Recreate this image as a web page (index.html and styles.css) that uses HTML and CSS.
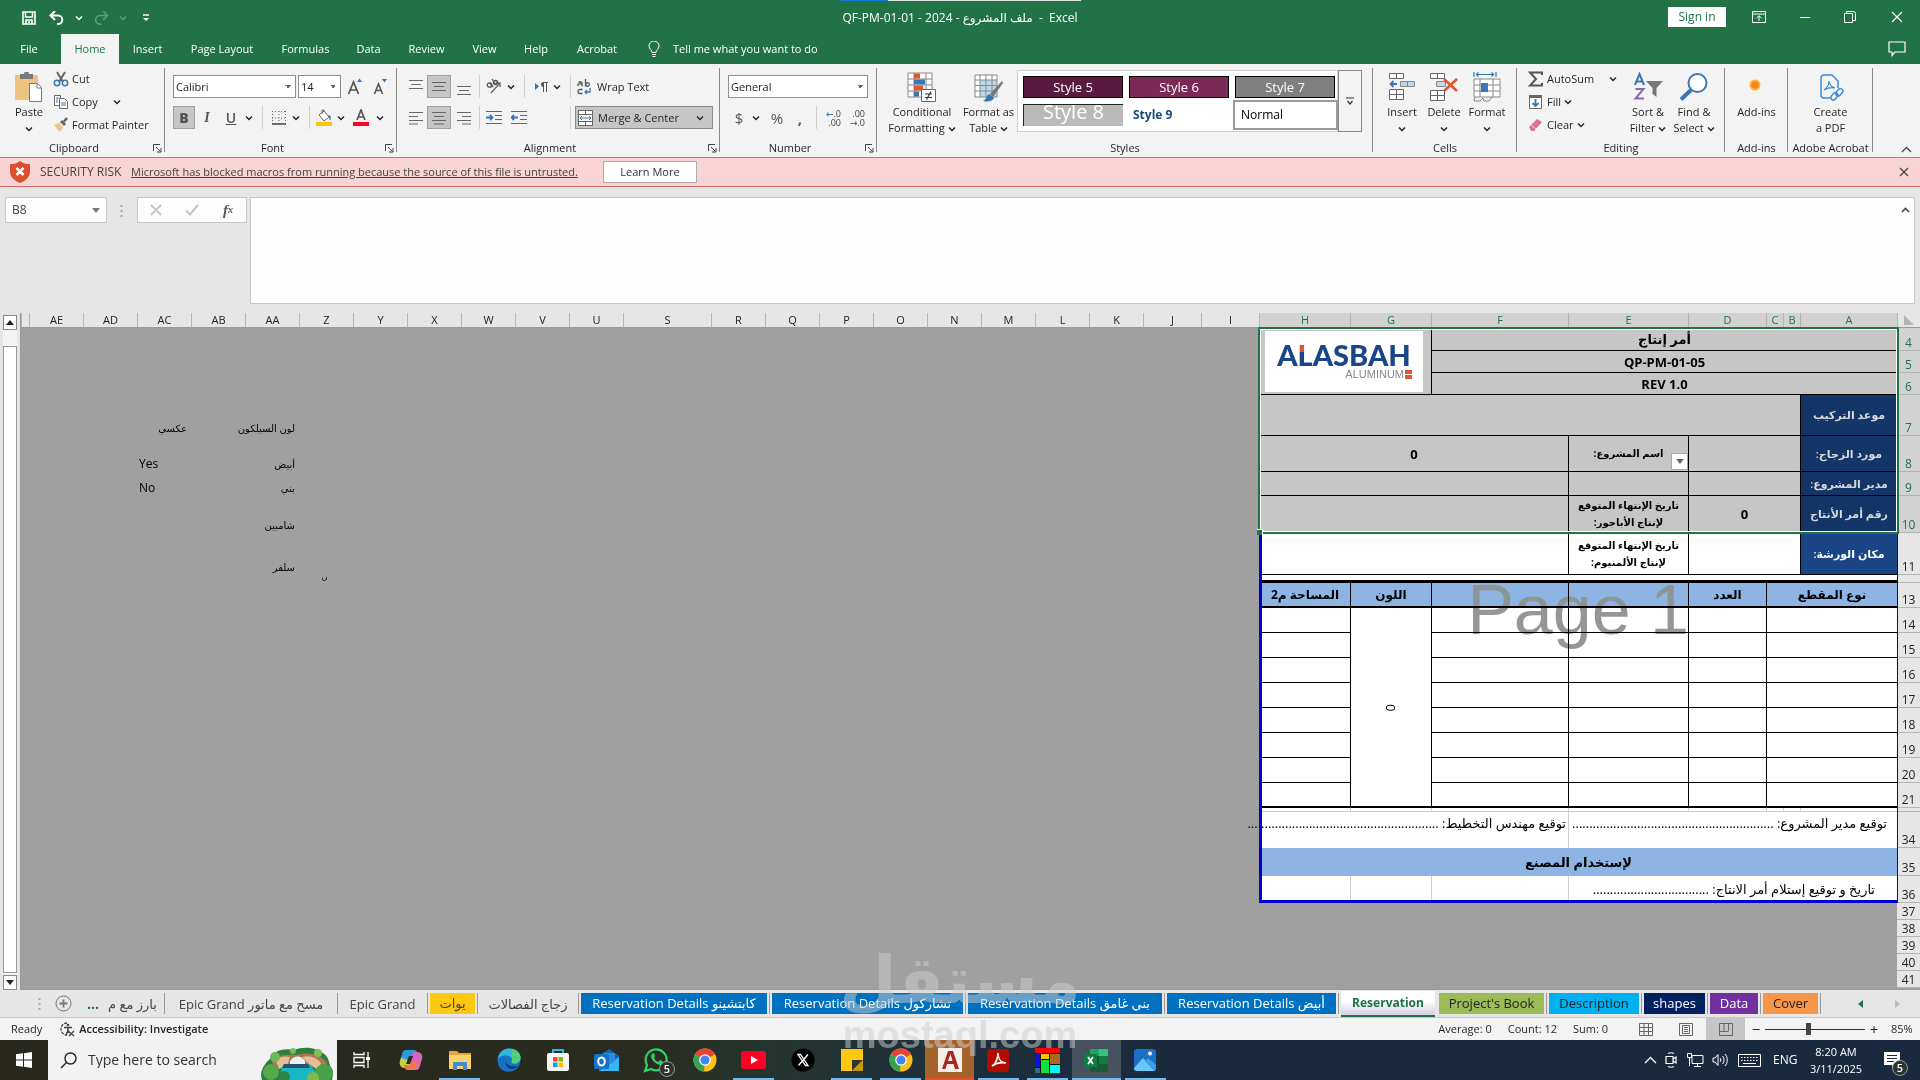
FILE: index.html
```html
<!DOCTYPE html>
<html lang="en">
<head>
<meta charset="utf-8">
<title>QF-PM-01-01 - 2024 - Excel</title>
<link rel="stylesheet" href="styles.css">
</head>
<body>
<svg class="defs" aria-hidden="true">
  <symbol id="caret" viewBox="0 0 8 6"><path d="M1 1.500 4 4.500 7 1.500" fill="none" stroke="currentColor" stroke-width="1.500"/></symbol>
  <symbol id="launch" viewBox="0 0 9 9"><path d="M.5 7V.5H7M3 3l4.500 4.500M8 4v4H4" fill="none" stroke="#444"/></symbol>
  <symbol id="chrome" viewBox="0 0 24 24"><circle cx="12" cy="12" r="11.500" fill="#fbc116"/><path d="M12 12 2 6.200A11.500 11.500 0 0 1 22 6.200Z" fill="#e94335"/><path d="M12 12 2 6.200A11.500 11.500 0 0 0 11 23.500Z" fill="#34a353"/><circle cx="12" cy="12" r="5.800" fill="#fff"/><circle cx="12" cy="12" r="4.600" fill="#4285f4"/></symbol>
</svg>

<header class="top">
  <div class="loading"></div>
  <div class="titlebar">
    <div class="qat">
      <button aria-label="Save"><svg width="14" height="14"><path d="M1 1h12v12H1zM3.500 1v5h7V1M4 13V9h6v4M7 10v2" fill="none" stroke="#fff" stroke-width="1.600"/></svg></button>
      <button aria-label="Undo"><svg width="16" height="14"><path d="M6 0 1.500 4.500 6 9M2 4.500h7a4.300 4.300 0 0 1 0 8.600H8" fill="none" stroke="#fff" stroke-width="2"/></svg></button>
      <button aria-label="Undo list"><svg width="8" height="6"><use href="#caret"/></svg></button>
      <button aria-label="Redo" class="dim"><svg width="16" height="14"><path d="M10 0l4.500 4.500L10 9M14 4.500H7a4.300 4.300 0 0 0 0 8.600h1" fill="none" stroke="#51a673" stroke-width="1.600"/></svg></button>
      <button aria-label="Redo list" class="dim"><svg width="8" height="6"><use href="#caret"/></svg></button>
      <button aria-label="Customize toolbar"><svg width="8" height="8"><path d="M1 1h6" stroke="#fff" stroke-width="1.400"/><path d="M1 4h6L4 7z" fill="#fff"/></svg></button>
    </div>
    <h1 class="doc">QF-PM-01-01 - 2024 - <bdi>ملف المشروع</bdi>&nbsp; -&nbsp; Excel</h1>
    <div class="winctl">
      <button class="signin">Sign in</button>
      <button aria-label="Ribbon display"><svg width="14" height="12"><path d="M.5.500h13v11H.5zM.5 3h13M7 10V5M4.500 7 7 4.700 9.500 7" fill="none" stroke="#fff"/></svg></button>
      <button aria-label="Minimize"><svg width="12" height="12"><path d="M1 6.500h10" stroke="#fff"/></svg></button>
      <button aria-label="Restore"><svg width="12" height="12"><path d="M.5 2.500h8v9h-8zM2.500 2.500v-2h7a2 2 0 0 1 2 2v7h-3" fill="none" stroke="#fff"/></svg></button>
      <button aria-label="Close"><svg width="12" height="12"><path d="M1 1l10 10M11 1 1 11" stroke="#fff" stroke-width="1.200"/></svg></button>
    </div>
  </div>
  <nav class="menu">
    <button>File</button><button class="on">Home</button><button>Insert</button><button>Page Layout</button><button>Formulas</button><button>Data</button><button>Review</button><button>View</button><button>Help</button><button>Acrobat</button>
    <button class="tell"><svg width="12" height="17"><path d="M4 11.500C4 9 1 8 1 5a5 5 0 0 1 10 0c0 3-3 4-3 6.500zM4 13.500h4M4.500 15.500h3" fill="none" stroke="#fff"/></svg>Tell me what you want to do</button>
    <button class="comment" aria-label="Comments"><svg width="18" height="16"><path d="M1 1h16v10H7l-3 3.500V11H1z" fill="none" stroke="#fff" stroke-width="1.200"/></svg></button>
  </nav>
</header>

<section class="ribbon">
  <div class="group g-clip">
    <div class="body">
      <button class="big"><svg width="30" height="30"><rect x="1" y="3" width="23" height="25" rx="1" fill="#ecc380"/><path d="M6 2h4a2.500 2.500 0 0 1 5 0h4v5H6z" fill="#7a7a7a"/><path d="M15.500 11.500h8l4 4v14h-12z" fill="#fff" stroke="#7a7a7a"/><path d="M23 12v4h4" fill="none" stroke="#7a7a7a"/></svg>Paste<svg width="8" height="6"><use href="#caret"/></svg></button>
      <div class="stack">
        <button><svg width="16" height="16"><path d="M4 1l6 10M12 1 6 11" stroke="#666" stroke-width="2"/><circle cx="4" cy="12" r="2.700" fill="none" stroke="#3a75b5" stroke-width="1.500"/><circle cx="12" cy="12" r="2.700" fill="none" stroke="#3a75b5" stroke-width="1.500"/></svg>Cut</button>
        <button><svg width="16" height="16"><path d="M1.500 1.500h6v10h-6z" fill="#fff" stroke="#666"/><path d="M6.500 4.500h5l3 3v7h-8z" fill="#fff" stroke="#666"/><path d="M3 4h3M3 6h2M3 8h2M8 9h5M8 11h5" stroke="#3a75b5"/></svg>Copy <svg class="far" width="8" height="6"><use href="#caret"/></svg></button>
        <button><svg width="16" height="16"><path d="M1 8l5-2 4 4-3 5z" fill="#ecc380"/><path d="M7 5l4 4 2-2-1.500-1.500L15 2l-2-2-3 4-1-1z" fill="#666"/></svg>Format Painter</button>
      </div>
    </div>
    <div class="label launched">Clipboard</div><svg class="launch" width="9" height="9"><use href="#launch"/></svg>
  </div>

  <div class="group g-font">
    <div class="body rows">
      <div class="row">
        <select class="sel" aria-label="Font"><option>Calibri</option></select>
        <select class="sel size" aria-label="Font size"><option>14</option></select>
        <button class="glyph" aria-label="Increase font size"><svg width="16" height="18"><path d="M1.500 16 6.500 4l5 12M3.200 12h6.600" fill="none" stroke="#555" stroke-width="1.700"/><path d="M10 4l2.500-3.500L15 4z" fill="#3a75b5"/></svg></button>
        <button class="glyph" aria-label="Decrease font size"><svg width="16" height="18"><path d="M1.500 16 5.500 6l4 10M3 12.500h5" fill="none" stroke="#555" stroke-width="1.600"/><path d="M9 1h5l-2.500 3.500z" fill="#3a75b5"/></svg></button>
      </div>
      <div class="row fontrow">
        <button class="on fmt"><b>B</b></button><button class="fmt it">I</button><button class="fmt un">U</button><button aria-label="Underline list"><svg width="8" height="6"><use href="#caret"/></svg></button><i class="sep"></i>
        <button aria-label="Borders"><svg width="14" height="14"><path d="M.5 0v13M13.500 0v13M7 0v13M0 .5h14M0 7h14" stroke="#666" stroke-dasharray="1 2"/><path d="M0 13h14" stroke="#444" stroke-width="1.500"/></svg></button><button aria-label="Borders list"><svg width="8" height="6"><use href="#caret"/></svg></button><i class="sep"></i>
        <button aria-label="Fill color"><svg width="17" height="17"><path d="M3 6l5-4 5 6-5 4z" fill="#fff" stroke="#666"/><path d="M6 5V1h2v2" fill="none" stroke="#666"/><path d="M12 6c4 0 3 4 2 6l-1-4z" fill="#3a75b5"/><path d="M0 13h16v4H0z" fill="#fec400"/></svg></button><button aria-label="Fill list"><svg width="8" height="6"><use href="#caret"/></svg></button>
        <button aria-label="Font color"><svg width="17" height="17"><path d="M4 11 8 1l4 10M5.400 8h5.200" fill="none" stroke="#555" stroke-width="1.700"/><path d="M0 13h16v4H0z" fill="#fe0023"/></svg></button><button aria-label="Color list"><svg width="8" height="6"><use href="#caret"/></svg></button>
      </div>
    </div>
    <div class="label launched">Font</div><svg class="launch" width="9" height="9"><use href="#launch"/></svg>
  </div>

  <div class="group g-align">
    <div class="body rows">
      <div class="row a1">
        <button aria-label="Top align"><svg width="14" height="17"><path d="M0 2.500h14M2 6.500h10M0 10.500h14" stroke="#666"/></svg></button>
        <button class="on" aria-label="Middle align"><svg width="14" height="17"><path d="M0 4.500h14M2 8.500h10M0 12.500h14" stroke="#666"/></svg></button>
        <button aria-label="Bottom align"><svg width="14" height="17"><path d="M0 8.500h14M2 12.500h10M0 16.500h14" stroke="#666"/></svg></button><i class="sep"></i>
        <button aria-label="Orientation"><svg width="17" height="17"><path d="M5 15 14 5M14 9V5h-4" fill="none" stroke="#666" stroke-width="1.300"/><circle cx="3.500" cy="7" r="2.200" fill="none" stroke="#555" stroke-width="1.300"/><path d="M4 5l3 4M6 1l4 6" stroke="#555" stroke-width="1.300"/><circle cx="9.500" cy="4.500" r="2" fill="none" stroke="#555" stroke-width="1.300"/></svg></button>
        <button aria-label="Orientation list"><svg width="8" height="6"><use href="#caret"/></svg></button><i class="sep"></i>
        <button aria-label="Text direction"><svg width="15" height="12"><path d="M1 2v7l4-3.500z" fill="#3a75b5"/><path d="M9.500 1v10M12.500 1v10M14 1.500H9" stroke="#555"/><path d="M9.500 1v5a2.500 2.500 0 0 1 0-5" fill="#555"/></svg></button>
        <button aria-label="Direction list"><svg width="8" height="6"><use href="#caret"/></svg></button><i class="sep"></i>
        <button class="wide"><svg width="15" height="16"><path d="M5 3.500v4M1.500 7a1.300 1.300 0 0 1 0-2.200H5M1.500 3H4l1 1M8.500 0v7.500" fill="none" stroke="#555" stroke-width="1.300"/><circle cx="10.500" cy="5.500" r="1.800" fill="none" stroke="#555" stroke-width="1.300"/><path d="M5.500 10.500H3a2 2 0 0 0 0 4h2.500" fill="none" stroke="#555" stroke-width="1.300"/><path d="M13 9v4H8M10 11l-2 2 2 2" fill="none" stroke="#3a75b5" stroke-width="1.300"/></svg>Wrap Text</button>
      </div>
      <div class="row a2">
        <button aria-label="Align left"><svg width="14" height="14"><path d="M0 1.500h14M0 5.500h9M0 9.500h14M0 13h9" stroke="#666"/></svg></button>
        <button class="on" aria-label="Center"><svg width="14" height="14"><path d="M0 1.500h14M2 5.500h10M0 9.500h14M2 13h10" stroke="#666"/></svg></button>
        <button aria-label="Align right"><svg width="14" height="14"><path d="M0 1.500h14M5 5.500h9M0 9.500h14M5 13h9" stroke="#666"/></svg></button><i class="sep"></i>
        <button aria-label="Decrease indent"><svg width="16" height="14"><path d="M0 .5h16M9 4.500h7M9 8.500h7M0 12.500h16" stroke="#666"/><path d="M0 6.500h6M4 4l2.500 2.500L4 9" fill="none" stroke="#3a75b5" stroke-width="1.800"/></svg></button>
        <button aria-label="Increase indent"><svg width="16" height="14"><path d="M0 .5h16M9 4.500h7M9 8.500h7M0 12.500h16" stroke="#666"/><path d="M7 6.500H1M3 4 .5 6.500 3 9" fill="none" stroke="#3a75b5" stroke-width="1.800"/></svg></button><i></i><i class="sep"></i>
        <button class="wide on"><svg width="15" height="16"><path d="M.5.500h14v15H.5zM0 4.500h15M0 11.500h15M7.500 0v4.500M7.500 11.500V16" fill="#fff" stroke="#666"/><path d="M2 8h11M4 6 2 8l2 2M11 6l2 2-2 2" fill="none" stroke="#3a75b5"/></svg>Merge &amp; Center<svg class="far" width="8" height="6"><use href="#caret"/></svg></button>
      </div>
    </div>
    <div class="label launched">Alignment</div><svg class="launch" width="9" height="9"><use href="#launch"/></svg>
  </div>

  <div class="group g-num">
    <div class="body rows">
      <div class="row"><select class="sel fmtsel" aria-label="Number format"><option>General</option></select></div>
      <div class="row n2">
        <button class="sym">$</button><button aria-label="Accounting list"><svg width="8" height="6"><use href="#caret"/></svg></button><button class="sym">%</button><button class="sym"><b>,</b></button><i class="sep"></i>
        <button class="dec" aria-label="Increase decimal"><span><em>←</em>.0</span><span>.00</span></button>
        <button class="dec" aria-label="Decrease decimal"><span>.00</span><span><em>→</em>.0</span></button>
      </div>
    </div>
    <div class="label launched">Number</div><svg class="launch" width="9" height="9"><use href="#launch"/></svg>
  </div>

  <div class="group g-style">
    <div class="body">
      <button class="big"><svg width="30" height="30"><path d="M1 1h24v24H1zM1 7h24M1 13h24M1 19h24M7 1v24M19 1v24" fill="#fff" stroke="#888"/><path d="M7 1.500h6v5H7zM7 13.500h9v5H7z" fill="#e0532c"/><path d="M7 7.500h11v5H7zM7 19.500h5v5H7z" fill="#3a75b5"/><path d="M14.500 17.500h14v12h-14z" fill="#fff" stroke="#666"/><path d="M18 22h7M18 25.500h7M24 19.500l-4.500 8" stroke="#333" stroke-width="1.200"/></svg><span>Conditional<br>Formatting <svg width="8" height="6"><use href="#caret"/></svg></span></button>
      <button class="big"><svg width="30" height="30"><path d="M1 3h22v22H1z" fill="#fff"/><path d="M6 8h17v17H6z" fill="#bcd9ea"/><path d="M1 3h22v22H1zM1 8h22M1 13.500h22M1 19h22M6 3v22M12 3v22M18 3v22" fill="none" stroke="#888"/><path d="M28 9 16 22l3 3L29 11z" fill="#777"/><path d="M15 22l5 4c-2 4-7 4-11 3 4-2 3-5 6-7z" fill="#3a75b5"/></svg><span>Format as<br>Table <svg width="8" height="6"><use href="#caret"/></svg></span></button>
      <div class="gallery">
        <div class="swatches">
          <button class="s5">Style 5</button><button class="s6">Style 6</button><button class="s7">Style 7</button>
          <button class="s8">Style 8</button><button class="s9">Style 9</button><button class="s10">Normal</button>
        </div>
        <button class="more" aria-label="More styles"><svg width="8" height="9"><path d="M0 1h8M1.500 4 4 7l2.500-3" fill="none" stroke="#333" stroke-width="1.200"/></svg></button>
      </div>
    </div>
    <div class="label">Styles</div>
  </div>

  <div class="group g-cells">
    <div class="body">
      <button class="big"><svg width="28" height="30"><path d="M1.500 1.500h14v5h-14zM8.500 1.500v5M1.500 17.500h14v10h-14zM8.500 17.500v10M1.500 22.500h14" fill="#fff" stroke="#666"/><path d="M12.500 9.500h14v5h-14zM19.500 9.500v5" fill="#bcd9ea" stroke="#888"/><path d="M9 12H3M5.500 9 2.500 12l3 3" fill="none" stroke="#3a75b5" stroke-width="1.800"/></svg>Insert<svg width="8" height="6"><use href="#caret"/></svg></button>
      <button class="big"><svg width="30" height="30"><path d="M1.500 1.500h14v5h-14zM8.500 1.500v5M1.500 18.500h14v10h-14zM8.500 18.500v10M1.500 23.500h14" fill="#fff" stroke="#666"/><path d="M7.500 9.500h9v5h-9z" fill="#bcd9ea" stroke="#888"/><path d="M15 7l13 12M28 7 15 19" stroke="#e0532c" stroke-width="2.500"/></svg>Delete<svg width="8" height="6"><use href="#caret"/></svg></button>
      <button class="big"><svg width="28" height="30"><path d="M1 7h26v18H1zM1 13h26M1 19h26M7 7v18M20 7v18" fill="#fff" stroke="#888"/><path d="M8 11h7v9H8z" fill="#3a75b5"/><path d="M2 25l-1 4h6l3-3 1 3h5l3-4" fill="none" stroke="#888"/><path d="M1 0v5M23 0v5M3 2.500h18M5.500.500l-2 2 2 2M18.500.500l2 2-2 2" fill="none" stroke="#3a75b5" stroke-width="1.200"/></svg>Format<svg width="8" height="6"><use href="#caret"/></svg></button>
    </div>
    <div class="label">Cells</div>
  </div>

  <div class="group g-edit">
    <div class="body">
      <div class="stack">
        <button><svg width="16" height="16"><path d="M14 4V1.500H2L8 8l-6 6.500h12V12" fill="none" stroke="#555" stroke-width="2"/></svg>AutoSum <svg class="far" width="8" height="6"><use href="#caret"/></svg></button>
        <button><svg width="16" height="16"><path d="M1.500 1.500h12v13h-12z" fill="#fff" stroke="#666"/><path d="M1 1h13v3H1z" fill="#666"/><path d="M7.500 5v7M4.500 9l3 3 3-3" fill="none" stroke="#3a75b5" stroke-width="1.800"/></svg>Fill <svg width="8" height="6"><use href="#caret"/></svg></button>
        <button><svg width="16" height="16"><path d="M1 10l8-8 5 3-8 9H3z" fill="#dc6fa0"/><path d="M3 8l5 4" stroke="#f6c9dc"/></svg>Clear <svg width="8" height="6"><use href="#caret"/></svg></button>
      </div>
      <button class="big"><svg width="30" height="30"><path d="M2 13 6.500 2l4.500 11M3.500 9.500h6" fill="none" stroke="#3a75b5" stroke-width="2"/><path d="M2.500 17h8l-8 9.500h8.500" fill="none" stroke="#8a68b8" stroke-width="2"/><path d="M13 9h17l-6.500 7v9l-4-3v-6z" fill="#777"/></svg><span>Sort &amp;<br>Filter <svg width="8" height="6"><use href="#caret"/></svg></span></button>
      <button class="big"><svg width="30" height="30"><circle cx="18.500" cy="11" r="9" fill="#fff" stroke="#3a75b5" stroke-width="2"/><path d="M12 18 2 27.500" stroke="#3a75b5" stroke-width="4"/></svg><span>Find &amp;<br>Select <svg width="8" height="6"><use href="#caret"/></svg></span></button>
    </div>
    <div class="label">Editing</div>
  </div>

  <div class="group g-add">
    <div class="body"><button class="big"><svg width="30" height="30"><circle cx="13" cy="13" r="5.500" fill="#fbb034"/><circle cx="13" cy="13" r="3.500" fill="#f5821f"/></svg>Add-ins</button></div>
    <div class="label">Add-ins</div>
  </div>
  <div class="group g-pdf">
    <div class="body"><button class="big"><svg width="30" height="30"><path d="M14 26H8a3 3 0 0 1-3-3V6a3 3 0 0 1 3-3h8l6 6v7" fill="none" stroke="#3b8ad8" stroke-width="1.500"/><path d="M8 18c3-2 5-6 5-9 1 5 3 6 6 7-4-1-7 0-11 2z" fill="none" stroke="#3b8ad8" stroke-width="1.200"/><rect x="14" y="22" width="8" height="5" rx="2.500" transform="rotate(-50 18 24)" fill="none" stroke="#3b8ad8" stroke-width="1.500"/><rect x="19" y="18" width="8" height="5" rx="2.500" transform="rotate(-50 23 20)" fill="none" stroke="#3b8ad8" stroke-width="1.500"/></svg><span>Create<br>a PDF</span></button></div>
    <div class="label">Adobe Acrobat</div>
  </div>
  <button class="collapse" aria-label="Collapse ribbon"><svg width="11" height="7"><path d="M1 6l4.500-4.500L10 6" fill="none" stroke="#444" stroke-width="1.300"/></svg></button>
</section>

<section class="risk">
  <svg width="20" height="22"><path d="M10 0c3 2.500 6 3 10 3v8c0 5-5 9-10 11C5 20 0 16 0 11V3c4 0 7-.5 10-3z" fill="#dc4f2c"/><path d="M6.500 7l7 7M13.500 7l-7 7" stroke="#fff" stroke-width="2.500"/></svg>
  <span class="risk-t">SECURITY RISK</span>
  <a href="#learn">Microsoft has blocked macros from running because the source of this file is untrusted.</a>
  <button class="learn">Learn More</button>
  <button class="x" aria-label="Dismiss"><svg width="10" height="10"><path d="M1 1l8 8M9 1 1 9" stroke="#444" stroke-width="1.300"/></svg></button>
</section>

<section class="formula">
  <label class="namebox"><input aria-label="Name Box" value="B8"><svg width="8" height="5"><path d="M0 0h8L4 5z" fill="#777"/></svg></label>
  <svg class="grip" width="3" height="12"><path d="M1.500 0v12" stroke="#aaa" stroke-width="2" stroke-dasharray="2 3"/></svg>
  <div class="fx">
    <button aria-label="Cancel"><svg width="12" height="12"><path d="M1 1l10 10M11 1 1 11" stroke="#c4c4c4" stroke-width="1.800"/></svg></button>
    <button aria-label="Enter"><svg width="14" height="12"><path d="M1 6.500 5 10.500 13 1" fill="none" stroke="#c4c4c4" stroke-width="2"/></svg></button>
    <button class="fxb"><i>f</i><sub>x</sub></button>
  </div>
  <div class="entry"><textarea aria-label="Formula"></textarea><svg width="9" height="6"><path d="M1 5l3.500-3.500L8 5" fill="none" stroke="#444" stroke-width="1.600"/></svg></div>
</section>

<main class="sheet">
  <div class="vscroll">
    <button aria-label="Scroll up"><svg width="8" height="5"><path d="M0 5h8L4 0z" fill="#222"/></svg></button>
    <div class="track"><div class="thumb"></div></div>
    <button aria-label="Scroll down"><svg width="8" height="5"><path d="M0 0h8L4 5z" fill="#222"/></svg></button>
  </div>
  <div class="gridwrap">
  <table class="grid" dir="rtl">
    <colgroup><col class="rh"><col class="cA"><col class="cB"><col class="cC"><col class="cD"><col class="cE"><col class="cF"><col class="cG"><col class="cH"><col class="cI"><col class="cI"><col class="c" span="8"><col class="cS"><col class="c" span="11"><col></colgroup>
    <thead><tr class="hd"><th class="corner"><svg width="10" height="10"><path d="M0 0v10h10z" fill="#b4b4b4"/></svg></th><th class="s">A</th><th class="s">B</th><th class="s">C</th><th class="s">D</th><th class="s">E</th><th class="s">F</th><th class="s">G</th><th class="s">H</th><th>I</th><th>J</th><th>K</th><th>L</th><th>M</th><th>N</th><th>O</th><th>P</th><th>Q</th><th>R</th><th>S</th><th>U</th><th>V</th><th>W</th><th>X</th><th>Y</th><th>Z</th><th>AA</th><th>AB</th><th>AC</th><th>AD</th><th>AE</th><th></th></tr></thead>
    <tbody>
    <tr class="h23 sl"><th>4</th><td colspan="6" class="t">أمر إنتاج</td><td colspan="2" rowspan="3" class="logo"><div class="logobox"><span class="l1">A<span class="tip">L</span>ASBAH</span><span class="l2">ALUMINUM<svg width="7" height="9"><path d="M0 0h7v4H0zM0 5h7v4H0z" fill="#e0532c"/></svg></span></div></td><td colspan="23" class="o"></td></tr>
    <tr class="h22 sl"><th>5</th><td colspan="6" class="t">QP-PM-01-05</td><td colspan="23" class="o"></td></tr>
    <tr class="h22 sl"><th>6</th><td colspan="6" class="t">REV 1.0</td><td colspan="23" class="o"></td></tr>
    <tr class="h41 sl"><th>7</th><td class="k">موعد التركيب</td><td colspan="7"></td><td colspan="17" class="o"></td><td class="o v">لون السيلكون</td><td class="o"></td><td class="o v">عكسي</td><td colspan="3" class="o"></td></tr>
    <tr class="h36 sl"><th>8</th><td class="k">مورد الزجاج:</td><td colspan="3"></td><td class="lab">اسم المشروع:<button class="dd" aria-label="Choose"><svg width="8" height="5"><path d="M0 0h8L4 5z" fill="#666"/></svg></button></td><td colspan="3" class="t">0</td><td colspan="17" class="o"></td><td class="o v">أبيض</td><td class="o"></td><td class="o v e">Yes</td><td colspan="3" class="o"></td></tr>
    <tr class="h24 sl"><th>9</th><td class="k">مدير المشروع:</td><td colspan="3"></td><td></td><td colspan="3"></td><td colspan="17" class="o"></td><td class="o v">بني</td><td class="o"></td><td class="o v e">No</td><td colspan="3" class="o"></td></tr>
    <tr class="h37 sl"><th>10</th><td class="k">رقم أمر الأنتاج</td><td colspan="3" class="t">0</td><td class="lab">تاريخ الإنتهاء المتوقع<br>لإنتاج الأباجور:</td><td colspan="3"></td><td colspan="17" class="o"></td><td class="o v">شامبين</td><td colspan="5" class="o"></td></tr>
    <tr class="h42"><th>11</th><td class="k">مكان الورشة:</td><td colspan="3"></td><td class="lab">تاريخ الإنتهاء المتوقع<br>لإنتاج الألمنيوم:</td><td colspan="3"></td><td colspan="17" class="o"></td><td class="o v">سلفر</td><td colspan="5" class="o"></td></tr>
    <tr class="h8"><th></th><td colspan="8" class="thick"></td><td colspan="16" class="o"></td><td class="o tiny">ں</td><td colspan="6" class="o"></td></tr>
    <tr class="h25 blue"><th>13</th><td colspan="3">نوع المقطع</td><td>العدد</td><td></td><td></td><td>اللون</td><td>المساحة م2</td><td colspan="23" class="o"></td></tr>
    <tr class="h25"><th>14</th><td colspan="3"></td><td></td><td></td><td></td><td rowspan="8" class="zero"><span>0</span></td><td></td><td colspan="23" class="o"></td></tr>
    <tr class="h25"><th>15</th><td colspan="3"></td><td></td><td></td><td></td><td></td><td colspan="23" class="o"></td></tr>
    <tr class="h25"><th>16</th><td colspan="3"></td><td></td><td></td><td></td><td></td><td colspan="23" class="o"></td></tr>
    <tr class="h25"><th>17</th><td colspan="3"></td><td></td><td></td><td></td><td></td><td colspan="23" class="o"></td></tr>
    <tr class="h25"><th>18</th><td colspan="3"></td><td></td><td></td><td></td><td></td><td colspan="23" class="o"></td></tr>
    <tr class="h25"><th>19</th><td colspan="3"></td><td></td><td></td><td></td><td></td><td colspan="23" class="o"></td></tr>
    <tr class="h25"><th>20</th><td colspan="3"></td><td></td><td></td><td></td><td></td><td colspan="23" class="o"></td></tr>
    <tr class="h25 last"><th>21</th><td colspan="3"></td><td></td><td></td><td></td><td></td><td colspan="23" class="o"></td></tr>
    <tr class="h4 soft"><th></th><td></td><td></td><td></td><td></td><td></td><td></td><td></td><td></td><td colspan="23" class="o"></td></tr>
    <tr class="h36 soft nb"><th>34</th><td colspan="5" class="sign">توقيع مدير المشروع: ...........................................................</td><td colspan="3" class="sign two">توقيع مهندس التخطيط: ........................................................</td><td colspan="23" class="o"></td></tr>
    <tr class="h28 blue nb"><th>35</th><td colspan="8">لإستخدام المصنع</td><td colspan="23" class="o"></td></tr>
    <tr class="h27 soft nb"><th>36</th><td colspan="5" class="sign in">تاريخ و توقيع إستلام أمر الانتاج: ..................................</td><td></td><td></td><td></td><td colspan="23" class="o"></td></tr>
    <tr class="h17"><th>37</th><td colspan="31" class="o"></td></tr>
    <tr class="h17"><th>38</th><td colspan="31" class="o"></td></tr>
    <tr class="h17"><th>39</th><td colspan="31" class="o"></td></tr>
    <tr class="h17"><th>40</th><td colspan="31" class="o"></td></tr>
    <tr class="h17"><th>41</th><td colspan="31" class="o"></td></tr>
    </tbody>
  </table>
  <div class="pagemark">Page 1</div>
  <div class="printarea"></div>
  <div class="selection"><i></i></div>
  </div>
</main>

<nav class="tabs">
  <svg class="grip" width="3" height="12"><path d="M1.500 0v12" stroke="#aaa" stroke-width="2" stroke-dasharray="2 3"/></svg>
  <button aria-label="New sheet"><svg width="17" height="17"><circle cx="8.500" cy="8.500" r="7.500" fill="none" stroke="#777"/><path d="M8.500 4.500v8M4.500 8.500h8" stroke="#777" stroke-width="1.800"/></svg></button>
  <button class="dots">...</button>
  <button class="tab" dir="rtl">بارز مع م</button>
  <button class="tab">Epic Grand مسح مع ماتور</button>
  <button class="tab">Epic Grand</button>
  <button class="tab yel"><span>يوات</span></button>
  <button class="tab">زجاج الفصالات</button>
  <button class="tab blu"><span>Reservation Details كابتشينو</span></button>
  <button class="tab blu"><span>Reservation Details تشاركول</span></button>
  <button class="tab blu"><span>Reservation Details بني غامق</span></button>
  <button class="tab blu"><span>Reservation Details أبيض</span></button>
  <button class="tab cur"><span>Reservation</span></button>
  <button class="tab grn"><span>Project's Book</span></button>
  <button class="tab sky"><span>Description</span></button>
  <button class="tab nvy"><span>shapes</span></button>
  <button class="tab pur"><span>Data</span></button>
  <button class="tab org"><span>Cover</span></button>
  <span></span>
  <button aria-label="Previous sheets"><svg width="5" height="8"><path d="M5 0v8L0 4z" fill="#217346"/></svg></button>
  <button aria-label="Next sheets"><svg width="5" height="8"><path d="M0 0v8l5-4z" fill="#bbb"/></svg></button>
</nav>

<footer class="status">
  <span>Ready</span>
  <span class="acc"><svg width="17" height="15"><path d="M8 1a6 6 0 1 0 0 12" fill="none" stroke="#444" stroke-width="1.300" stroke-dasharray="3 1"/><circle cx="9" cy="3" r="1.300" fill="#444"/><path d="M5 5.500h8M9 6v3l-2 4M9 9l6 5M15 9l-5 5" stroke="#444" stroke-width="1.400"/></svg>Accessibility: Investigate</span>
  <span class="sum">Average: 0</span><span>Count: 12</span><span>Sum: 0</span>
  <div class="views">
    <button aria-label="Normal view"><svg width="14" height="13"><path d="M.5.500h13v12H.5zM.5 4.500h13M.5 8.500h13M5 0v13M9.500 0v13" fill="none" stroke="#666"/></svg></button>
    <button aria-label="Page layout view"><svg width="14" height="13"><path d="M.5.500h13v12H.5zM3.500 2.500h7v8h-7zM5 4.500h4M5 6.500h4M5 8.500h4" fill="none" stroke="#666"/></svg></button>
    <button class="on" aria-label="Page break view"><svg width="14" height="13"><path d="M.5.500h13v12H.5zM5 0v8M9.500 0v8M.5 8.500h9" fill="none" stroke="#666"/></svg></button>
  </div>
  <div class="zoom"><button>−</button><input type="range" min="0" max="100" value="43" aria-label="Zoom"><button>+</button></div>
  <span class="pct">85%</span>
</footer>

<footer class="taskbar">
  <button class="start" aria-label="Start"><svg width="16" height="16"><path d="M0 2.300 7 1.300v6.200H0zM8 1.200 16 0v7.500H8zM0 8.500h7v6.200l-7-1zM8 8.500h8V16l-8-1.200z" fill="#fff"/></svg></button>
  <label class="search"><svg width="17" height="17"><circle cx="10.500" cy="6.500" r="5.500" fill="none" stroke="#222" stroke-width="1.400"/><path d="M6.500 10.500 1 16" stroke="#222" stroke-width="1.400"/></svg><input placeholder="Type here to search" aria-label="Search">
    <svg class="art" width="74" height="33" viewBox="0 0 74 33"><path d="M2 33C-1 25 4 17 10 12 14 3 24 1 34 3 44-1 56 1 61 5c7 3 8 9 9 14 4 4 3 9 2 14z" fill="#2f7d3f"/><path d="M12 15C18 6 28 8 36 8c10-3 24-2 31 8v6l-9 3-6-8H24l-8 7z" fill="#a87952"/><path d="M16 14c4-5 9-5 14-4l-3 9-8 3zM42 10c8-2 14 0 19 6l-3 7-9-6z" fill="#e6bd92"/><path d="M30 14c4-6 11-6 15 0v3H30z" fill="#e8f2f4"/><path d="M24 17h26l6 9-8 7H24l-4-7z" fill="#17b8c4"/><path d="M24 17h24l2 4H22z" fill="#26506e"/><circle cx="11" cy="25" r="8" fill="#53a94c"/><circle cx="24" cy="30" r="6" fill="#2c8646"/><circle cx="64" cy="26" r="9" fill="#4aa14b"/><circle cx="53" cy="31" r="6" fill="#7cba4d"/><circle cx="15" cy="10" r="5" fill="#6fb955"/><circle cx="58" cy="6" r="4" fill="#82bd55"/><circle cx="33" cy="4" r="3" fill="#79bd5a"/></svg></label>
  <div class="apps">
    <button aria-label="Task view"><svg width="18" height="16"><path d="M1 0v2.500h10V0M1 16v-2.500h10V16M1 5.500h10v5H1zM15 0v16" fill="none" stroke="#fff" stroke-width="1.300"/><path d="M13 5h4v3h-4z" fill="#fff"/></svg></button>
    <button aria-label="Copilot"><svg width="24" height="24"><path d="M7 2h8c2 0 3 1 3.500 3l.5 2h-5l-4 13H6c-4 0-6-3-5-7l2-7c1-3 2-4 4-4z" fill="#2b9ae0"/><path d="M2 10l-1 3c-1 4 1 7 5 7h4l2-7z" fill="#c9cf3b"/><path d="M17 22H9c-2 0-3-1-3.500-3L5 17h5l4-13h4c4 0 6 3 5 7l-2 7c-1 3-2 4-4 4z" fill="#d765b8"/><path d="M12 13l-2 4H5l.5 2c.5 2 1.500 3 3.500 3h7l4-6z" fill="#f4774b"/><path d="M10 8h4l-3 8H7z" fill="#28281e"/></svg></button>
    <button class="run" aria-label="File Explorer"><svg width="24" height="22"><path d="M1 2h8l2 2h12v16H1z" fill="#e8a33a"/><path d="M1 6h22v14H1z" fill="#fbd36b"/><path d="M5 21v-8h14v8h-4v-4H9v4z" fill="#3d8fd8"/></svg></button>
    <button aria-label="Edge"><svg width="24" height="24"><circle cx="12" cy="12" r="11.500" fill="#1178c8"/><path d="M1 11C2 4 7 .5 12 .5c7 0 11.500 4 11.500 9 0 4-3 6-6 6-4 0-3-2-2.500-3 0-4-3-5-6-5-4 0-7 1-8 3.500z" fill="#35b8d8"/><path d="M15 1c5 1 8.500 4.500 8.500 8.500 0 4-3 6-6 6-4 0-3-2-2.500-3 0-5-1-8 0-11.500z" fill="#56cf7c"/><path d="M8 12c-1 5 3 9 8 9.500-6 4-13 1-14.500-5C1 11 4 7.500 9 7.500 7.500 8.500 8 10 8 12z" fill="#1a6fc0"/><path d="M9 10c-2 5 3 10 12 8-2 2-4 3-6 3-5 0-8-6-6-11z" fill="#123c7a"/></svg></button>
    <button aria-label="Store"><svg width="24" height="24"><path d="M7 6V2h10v4" fill="none" stroke="#2fb7ee" stroke-width="2"/><rect x="1" y="5" width="22" height="18" rx="2" fill="#f5f5f5"/><path d="M7 9h4.500v4.500H7z" fill="#f25022"/><path d="M12.500 9H17v4.500h-4.500z" fill="#7fba00"/><path d="M7 14.500h4.500V19H7z" fill="#00a4ef"/><path d="M12.500 14.500H17V19h-4.500z" fill="#ffb900"/></svg></button>
    <button aria-label="Outlook"><svg width="26" height="24"><path d="M5 8 15 1l10 7v15H5z" fill="#1066b5"/><path d="M5 23 25 9v14z" fill="#35b8f1"/><path d="M9 5h12v8l-6 4-6-4z" fill="#2a8fdd"/><rect x="0" y="6" width="15" height="15" rx="1.500" fill="#1473c7"/><ellipse cx="7.500" cy="13.500" rx="3.300" ry="4" fill="none" stroke="#fff" stroke-width="2"/></svg></button>
    <button aria-label="WhatsApp"><svg width="26" height="26"><path d="M2 24l2-6a10.500 10.500 0 1 1 4 4z" fill="none" stroke="#2bd366" stroke-width="2.200"/><path d="M9 7c-3 3 2 10 8 11 3 0 4-3 2-4l-2-1-2 2c-2-1-3-2-4-4l1-2-1-3z" fill="#2bd366"/></svg><span class="badge">5</span></button>
    <button aria-label="Chrome"><svg width="24" height="24"><use href="#chrome"/></svg></button>
    <button class="run" aria-label="YouTube"><svg width="26" height="18"><rect width="25" height="18" rx="3" fill="#fe0023"/><path d="M10 5v8l7-4z" fill="#fff"/></svg></button>
    <button aria-label="X"><svg width="24" height="24"><circle cx="12" cy="12" r="11.500" fill="#000"/><path d="M7 6.500h2.500L17 17.500h-2.500zM17 6.500l-9.500 11" fill="none" stroke="#fff" stroke-width="1.300"/></svg></button>
    <button class="run" aria-label="Sticky Notes"><svg width="24" height="24"><path d="M1 1h22v22H1z" fill="#fec810"/><path d="M12 23V12h11z" fill="#333"/><path d="M12 23 23 12v11z" fill="#c59a10"/></svg></button>
    <button class="run" aria-label="Chrome window"><svg width="24" height="24"><use href="#chrome"/></svg></button>
    <button class="acad" aria-label="AutoCAD"><svg width="24" height="24"><path d="M0 0h24v24H0z" fill="#f6eee8"/><path d="M4 21 10 3h5l6 18h-4l-1.500-5H9l-1.500 5zM10 13h4.500L12.500 6z" fill="#a8281e"/></svg></button>
    <button class="run" aria-label="Acrobat"><svg width="23" height="24"><rect width="22" height="23" y="1" rx="4" fill="#b30b00"/><path d="M5 18c3-1 6-7 6-13 0 6 3 10 8 10-5-1-10 0-14 3z" fill="none" stroke="#fff" stroke-width="1.600"/></svg></button>
    <button class="run" aria-label="Blocks"><svg width="25" height="25"><path d="M0 0h25v25H0z" fill="#111"/><path d="M0 0h25v5H0z" fill="#fe0000"/><path d="M0 6h5v13H0z" fill="#1010e0"/><path d="M6 6h8v5H6z" fill="#fec400"/><path d="M15 6h10v10H15z" fill="#a86a20"/><path d="M6 12h8v13H6z" fill="#10e040"/><path d="M15 17h10v8H15z" fill="#00f8ff"/><path d="M0 20h5v5H0z" fill="#2a7080"/></svg></button>
    <button class="run act" aria-label="Excel"><svg width="25" height="23"><path d="M6 0h18v23H6z" fill="#21a366"/><path d="M15 0h9v7h-9z" fill="#33c481"/><path d="M6 7h9v8H6zM15 15h9v8H6v-8z" fill="#185c37"/><path d="M15 7h9v8h-9z" fill="#107c41"/><rect y="5" width="13" height="13" rx="1" fill="#107c41"/><path d="M4 8l5 7M9 8l-5 7" stroke="#fff" stroke-width="1.700"/></svg></button>
    <button class="run" aria-label="Photos"><svg width="23" height="23"><rect width="22" height="22" rx="3" fill="#1b6fc4"/><path d="M0 19 9 9l12 13H3a3 3 0 0 1-3-3z" fill="#6cc5f7"/><path d="M11 12l3-3 8 7v3a3 3 0 0 1-2 3z" fill="#3aa0ea"/><circle cx="16" cy="4.500" r="2" fill="#fff"/></svg></button>
  </div>
  <div class="tray">
    <svg width="13" height="8"><path d="M1 7l5.500-5.500L12 7" fill="none" stroke="#fff" stroke-width="1.400"/></svg>
    <svg width="12" height="16"><path d="M3 1.500c2-1 4-1 6 0M3 14.500c2 1 4 1 6 0M1 4.500h7v7H1zM8 7l3-2v6L8 9" fill="none" stroke="#fff" stroke-width="1.200"/></svg>
    <svg width="17" height="15"><path d="M5 2.500h11v8H5zM10.500 10.500v3M7 13.500h7M.5.500h4v4h-4zM2.500 4v9" fill="none" stroke="#fff"/></svg>
    <svg width="18" height="14"><path d="M1 5h2l3-3.500v11L3 9H1z" fill="none" stroke="#fff"/><path d="M8 5c1 1 1 3 0 4M10.500 3c2 2 2 6 0 8M13 1c3 3 3 9 0 12" fill="none" stroke="#fff"/></svg>
    <svg width="24" height="13"><path d="M.5.500h22v12H.5z" fill="none" stroke="#fff"/><path d="M3 3.500h18M3 6.500h18" stroke="#fff" stroke-dasharray="1.500 1.500"/><path d="M5 9.500h13" stroke="#fff"/></svg>
    <span class="lang">ENG</span>
    <div class="clock"><span>8:20 AM</span><span>3/11/2025</span></div>
    <div class="note"><svg width="17" height="17"><path d="M0 0h16v13h-5l-3 4v-4H0z" fill="#fff"/><path d="M3 3.500h10M3 6.500h10M3 9.500h7" stroke="#1a2a3e"/></svg><span class="badge">5</span></div>
  </div>
</footer>

<div class="brand" aria-hidden="true"><span class="b1">مستقل</span><span class="b2">mostaql.com</span></div>
</body>
</html>
```
FILE: styles.css
```css
* { box-sizing: border-box; }
body { margin: 0; height: 100vh; display: flex; flex-direction: column; overflow: hidden; background: #e6e6e6; color: #262626; font: 12px/16px "Open Sans", "Noto Sans", "DejaVu Sans", sans-serif; }
button { border: 0; padding: 0; margin: 0; background: none; font: inherit; color: inherit; display: inline-flex; align-items: center; justify-content: center; white-space: nowrap; }
svg { flex: none; display: block; }
.defs { position: absolute; width: 0; height: 0; }

/* title bar and menu */
.top { background: #217346; color: #fff; position: relative; flex: none; }
.loading { position: absolute; top: 0; left: 840px; width: 241px; height: 1px; background: linear-gradient(to right, #0f79d8 48px, #dfe8e2 48px); }
.titlebar { height: 34px; display: grid; grid-template-columns: 1fr auto 1fr; }
.qat { display: grid; grid-template-columns: 26px 30px 14px 30px 14px 32px; padding-left: 16px; align-items: center; padding-bottom: 1px; }
.dim { color: #51a673; }
.doc { margin: 0; font-size: 12px; line-height: 36px; font-weight: 400; }
.winctl { display: grid; grid-template-columns: 58px 65px 28px 62px 32px; justify-content: end; align-items: center; padding: 0 7px 2px 0; }
.signin { background: #fff; color: #217346; height: 20px; padding-bottom: 1px; }
.menu { height: 30px; display: grid; grid-template-columns: 61px 58px 57px 92px 75px 51px 65px 51px 52px 70px 1fr 46px; font-size: 11px; }
.menu .on { background: #f3f3f3; color: #217346; }
.menu button:first-child { padding-right: 3px; }
.menu .tell { justify-content: flex-start; gap: 13px; padding-left: 16px; }

/* ribbon */
.ribbon { height: 93px; flex: none; background: #f3f3f3; display: flex; }
.group { position: relative; flex: none; display: flex; flex-direction: column; }
.group::after { content: ""; position: absolute; right: 0; top: 4px; bottom: 5px; width: 1px; background: #8a8a8a; }
.body { flex: 1; display: flex; }
.label { height: 18px; line-height: 18px; text-align: center; font-size: 11px; }
.launched { padding-right: 17px; }
.launch { position: absolute; right: 3px; bottom: 4px; }
.g-clip { width: 165px; } .g-font { width: 232px; } .g-align { width: 323px; } .g-num { width: 157px; } .g-style { width: 496px; } .g-cells { width: 144px; } .g-edit { width: 208px; } .g-add { width: 63px; } .g-pdf { width: 85px; }
.big { flex-direction: column; justify-content: flex-start; padding-top: 8px; gap: 2px; line-height: 16px; font-size: 11px; }
.big > svg + svg { margin-top: 4px; }
.big span svg { display: inline-block; }
.stack { display: grid; grid-template-rows: 23px 23px 23px; padding-top: 3px; }
.stack button { justify-content: flex-start; gap: 3px; font-size: 11px; }
.stack .far { margin-left: 12px; }
.g-clip .big { width: 44px; margin: 0 2px 0 7px; }
.rows { flex-direction: column; gap: 8px; padding: 11px 0 0 8px; }
.row { display: flex; height: 23px; gap: 2px; }
.sel { appearance: none; width: 123px; height: 23px; border: 1px solid #8f8f8f; border-radius: 0; padding: 0 2px; font: inherit; font-size: 11px; color: #222; background: conic-gradient(from -45deg at 50% 100%, #666 90deg, #fff 90deg) right 4px center / 6px 3px no-repeat, #fff; }
.size { width: 43px; }
.fmtsel { width: 140px; }
.glyph { width: 24px; }
.sep { width: 1px; background: #d0d0d0; justify-self: center; }
.row .on, .views .on { background: #c6c6c6; }
.row .on { border: 1px solid #a0a0a0; }
.fontrow, .a1, .a2, .n2 { display: grid; gap: 0; }
.fontrow { grid-template-columns: 22px 24px 24px 12px 14px 20px 14px 12px 18px 16px 24px 14px; }
.fmt { font-weight: 600; font-size: 14px; color: #555; }
.it { font-style: italic; font-family: "Liberation Serif", serif; }
.un { text-decoration: underline; }
.a1 { grid-template-columns: 22px 24px 26px 4px 26px 8px 18px 16px 16px 10px 138px; }
.a2 { grid-template-columns: 22px 24px 26px 4px 26px 24px 34px 10px 138px; }
.wide { justify-content: flex-start; gap: 5px; padding: 0 2px; font-size: 11px; }
.wide.on { border-color: #8a8a8a; }
.wide .far { margin-left: auto; margin-right: 6px; }
.n2 { grid-template-columns: 22px 12px 30px 16px 16px 20px 24px; }
.sym { font-size: 15px; color: #555; }
.dec { flex-direction: column; align-items: flex-end; justify-content: center; font-size: 9px; line-height: 9px; color: #444; padding-right: 3px; }
.dec em { color: #3a75b5; font-style: normal; font-weight: 700; }
.g-style .body { padding-left: 7px; }
.g-style .big:first-child { width: 76px; }
.g-style .big:nth-child(2) { width: 57px; }
.gallery { display: flex; margin: 6px 0 5px; height: 62px; }
.swatches { display: grid; grid-template-columns: 100px 100px 100px; grid-template-rows: 22px 22px; gap: 6px; padding: 5px; background: #fff; border: 1px solid #d0d0d0; width: 321px; font-size: 13px; }
.s5 { background: #5a1a3d; color: #fff; box-shadow: inset 0 0 0 1px #000; }
.s6 { background: #7c2a55; color: #fff; box-shadow: inset 0 0 0 1px #000; }
.s7 { background: #808080; color: #fff; box-shadow: inset 0 0 0 1px #000; }
.swatches .s8 { overflow: hidden; background: #bababa; color: #fff; font-size: 20px; border-top: 1px solid #222; border-left: 1px solid #222; padding-bottom: 8px; }
.swatches .s9 { color: #174a7c; font-weight: 700; font-size: 12px; justify-content: flex-start; padding-left: 4px; }
.swatches .s10 { color: #000; justify-content: flex-start; padding-left: 4px; font-size: 12px; box-shadow: 0 0 0 2px #fff, 0 0 0 4px #9a9a9a; margin: 0 1px 0 2px; }
.more { width: 24px; border: 1px solid #8a8a8a; }
.g-cells .body { padding-left: 8px; display: grid; grid-template-columns: 42px 42px 44px; }
.g-edit .body { padding-left: 11px; display: grid; grid-template-columns: 97px 46px 46px; }
.g-add .big, .g-pdf .big { width: 100%; }
.collapse { margin: auto 8px 4px auto; }

/* message bar */
.risk { height: 30px; flex: none; display: flex; align-items: center; background: #f9d4d4; border: 1px solid #e06666; border-width: 1px 0; padding: 0 11px 0 10px; }
.risk-t { margin: 0 10px; width: 81px; white-space: nowrap; color: #444; font-size: 12px; }
.risk a { color: #444; text-decoration: underline; width: 472px; font-size: 11px; white-space: nowrap; }
.learn { background: #fff; border: 1px solid #ababab; width: 94px; height: 22px; font-size: 11px; color: #333; }
.x { margin-left: auto; }

/* formula bar */
.formula { flex: none; height: 126px; padding: 10px 5px 10px; display: flex; align-items: flex-start; }
.namebox { width: 102px; height: 26px; border: 1px solid #c6c6c6; background: #fdfdfd; display: flex; align-items: center; padding: 0 6px; }
.namebox input { border: 0; outline: 0; background: none; width: 100%; min-width: 0; font: inherit; color: #444; padding: 0; }
.formula .grip { margin: 8px 14px 0 13px; }
.fx { width: 110px; height: 26px; border: 1px solid #c6c6c6; background: #fdfdfd; display: grid; grid-template-columns: repeat(3, 1fr); }
.fxb { font: italic 700 15px/20px "Liberation Serif", serif; color: #555; }
.fxb sub { font-size: 10px; }
.entry { flex: 1; margin-left: 3px; height: 107px; border: 1px solid #c6c6c6; background: #fdfdfd; display: flex; padding: 9px 4px 0 0; }
.entry textarea { flex: 1; border: 0; outline: 0; resize: none; background: none; }

/* worksheet */
.sheet { flex: 1; min-height: 0; display: flex; }
.vscroll { width: 21px; padding: 2px 3px 0; display: flex; flex-direction: column; border-right: 1px solid #999; }
.vscroll button { height: 15px; border: 1px solid #888; background: #fff; }
.track { flex: 1; background: #f3f3f3; padding: 16px 0 2px; display: flex; }
.thumb { flex: 1; background: #fff; border: 1px solid #999; }
.gridwrap { flex: 1; position: relative; overflow: hidden; background: #a0a0a0; border-bottom: 1px solid #999; }
.grid { width: 100%; table-layout: fixed; border-collapse: separate; border-spacing: 0; font-size: 12px; line-height: 16px; color: #000; }
.rh { width: 23px; } .cA { width: 97px; } .cB { width: 17px; } .cC { width: 17px; } .cD { width: 78px; } .cE { width: 120px; } .cF { width: 137px; } .cG { width: 81px; } .cH { width: 91px; } .cI { width: 58px; } .c { width: 54px; } .cS { width: 88px; }
.grid th, .grid td { padding: 0; }
.grid th { font-weight: 400; background: #e6e6e6; color: #222; vertical-align: bottom; line-height: 14px; border-bottom: 1px solid #b4b4b4; }
.grid .hd th { height: 15px; border-left: 1px solid #b4b4b4; border-bottom-color: #999; vertical-align: middle; font-size: 11px; }
.grid .hd .s, .grid .sl th { background: #d2d2d2; color: #217346; }
.grid .hd .corner { background: #e6e6e6; }
.corner svg { margin: 0 auto; }
.grid td { text-align: center; background: #fff; border: 0 solid #000; border-width: 0 0 1px 1px; }
.grid .sl td { background: #c6c6c6; }
.grid .t { font-weight: 700; font-size: 13px; }
.grid .k { background: #1a4587; color: #fff; font-weight: 600; font-size: 11px; }
.grid .sl .k { background: #133567; color: #d9d9d9; }
.grid .lab { font-weight: 700; font-size: 10px; line-height: 17px; position: relative; }
.dd { position: absolute; right: 0; bottom: 1px; width: 17px; height: 17px; background: #fff; border: 1px solid #aaa; }
.grid .v { text-align: right; vertical-align: bottom; font-size: 10px; padding: 0 4px 0 2px; white-space: nowrap; }
.grid .e { text-align: left; font-size: 12px; }
.grid .tiny { font-size: 8px; line-height: 4px; vertical-align: top; padding-right: 3px; }
.grid .h8 .thick { border-bottom-width: 3px; }
.grid .blue td { background: #8db4e2; font-weight: 700; font-size: 12px; border-bottom-width: 2px; }
.grid .last td, .grid .zero { border-bottom-width: 2px; }
.grid .zero span { display: inline-block; writing-mode: vertical-rl; font-size: 13px; }
.grid .soft td { border-color: #d0d0d0; }
.grid .nb td { border-bottom-width: 0; }
.grid .blue.nb td { font-size: 13px; }
.grid .sign { text-align: right; white-space: nowrap; font-size: 13px; padding-right: 10px; vertical-align: top; line-height: 22px; }
.grid .two { padding-right: 2px; }
.grid .in { padding-right: 22px; line-height: 26px; }
.grid tbody tr td.o { background: #a0a0a0; border: 0; }
.logobox { margin: 0 8px 0 5px; height: 61px; background: #fff; display: flex; flex-direction: column; align-items: center; justify-content: center; direction: ltr; }
.l1 { font: 900 29px/26px "Lato", sans-serif; color: #1a4587; }
.tip { background: linear-gradient(#e0532c 44%, #1a4587 44%); background-clip: text; color: transparent; }
.l2 { align-self: flex-end; display: flex; align-items: center; gap: 1px; font: 11px/12px "Liberation Sans", sans-serif; color: #888; padding-right: 11px; }
.h4 { height: 4px; } .h8 { height: 8px; } .h17 { height: 17px; } .h22 { height: 22px; } .h23 { height: 23px; } .h24 { height: 24px; } .h25 { height: 25px; } .h27 { height: 27px; } .h28 { height: 28px; } .h36 { height: 36px; } .h37 { height: 37px; } .h41 { height: 41px; } .h42 { height: 42px; }
.pagemark { position: absolute; right: 231px; top: 257px; font: 70px/80px "Liberation Sans", sans-serif; color: #969696; mix-blend-mode: darken; }
.printarea { position: absolute; right: 22px; top: 220px; width: 639px; height: 370px; border: solid #0000d0; border-width: 0 1px 3px 3px; }
.selection { position: absolute; right: 21px; top: 14px; width: 641px; height: 207px; border: 2px solid #217346; box-shadow: inset 0 0 0 1px #fff; }
.selection i { position: absolute; left: -3px; bottom: -3px; width: 6px; height: 6px; background: #217346; border: solid #fff; border-width: 1px 1px 0 0; }

/* sheet tabs */
.tabs { height: 28px; flex: none; border-bottom: 1px solid #c6c6c6; display: grid; grid-template-columns: 41px 44px 16px 64px 173px 90px 50px 101px 191px 196px 199px 174px 98px 110px 95px 66px 53px 60px 1fr 30px 45px; font-size: 13px; align-items: center; color: #444; }
.tabs .grip { justify-self: end; }
.dots { color: #217346; font-weight: 700; font-size: 14px; }
.tab { height: 21px; border-right: 1px solid #999; padding: 0 2px; }
.tab span { flex: 1; line-height: 21px; }
.yel span { background: #fec810; }
.blu span { background: #0070c0; color: #fff; }
.cur { height: 27px; border: 0; }
.cur span { background: linear-gradient(#fff 40%, #d3cfe2); color: #217346; font-weight: 700; line-height: 24px; border-bottom: 2px solid #217346; font-size: 12px; }
.grn span { background: #9bbb59; color: #222; }
.sky span { background: #00b0f0; color: #222; }
.nvy span { background: #002060; color: #fff; }
.pur span { background: #7030a0; color: #fff; }
.org span { background: #f79646; color: #222; }

/* status bar */
.status { height: 22px; flex: none; background: #f3f3f3; display: flex; align-items: center; padding-left: 11px; font-size: 11px; }
.acc { display: flex; align-items: center; gap: 3px; margin-left: 17px; font-weight: 600; }
.sum { margin-left: auto; }
.sum, .sum + span { margin-right: 16px; }
.views { display: grid; grid-template-columns: 40px 40px 39px; margin-left: 18px; height: 100%; }
.zoom { display: flex; align-items: center; margin-left: 5px; gap: 3px; }
.zoom button { width: 12px; font-size: 15px; }
.zoom input { appearance: none; width: 100px; height: 12px; margin: 0; background: linear-gradient(#333, #333) center / 100% 1px no-repeat; }
.zoom input::-webkit-slider-thumb { appearance: none; width: 5px; height: 12px; background: #444; }
.pct { width: 40px; padding-left: 11px; }

/* taskbar */
.taskbar { height: 40px; flex: none; display: flex; color: #fff; background: linear-gradient(to right, #28281e 0, #2a2c20 34%, #24352f 40%, #1d2f3b 50%, #1a2a3e 62%, #1a2a3e); }
.start { width: 48px; }
.search { width: 289px; background: #f2f2f2; display: flex; align-items: center; padding-left: 12px; gap: 11px; }
.search input { flex: 1; min-width: 0; border: 0; padding: 0; background: none; font: inherit; font-size: 14px; }
.search input::placeholder { color: #333; opacity: 1; }
.art { align-self: flex-end; margin-right: 3px; }
.apps { display: grid; grid-template-columns: repeat(17, 49px); }
.apps button { position: relative; }
.apps .run { box-shadow: inset 0 -2px #76b9ed; margin: 0 4px; }
.apps .acad { background: #a5632c; box-shadow: inset 0 -2px #e8502a; }
.apps .act { background: #46525f; margin: 0; }
.badge { position: absolute; right: 5px; bottom: 3px; width: 16px; height: 16px; border: 1px solid #999; border-radius: 50%; background: #2e3330; font-size: 11px; line-height: 14px; text-align: center; font-weight: 600; }
.tray { margin-left: auto; display: flex; align-items: center; gap: 8px; }
.lang { width: 24px; margin-left: 3px; }
.clock { display: flex; flex-direction: column; align-items: center; width: 62px; line-height: 17px; font-size: 11px; }
.tray svg:nth-child(3) { margin-left: 2px; }
.note { position: relative; width: 45px; padding-left: 9px; }
.note .badge { right: 12px; bottom: -7px; }

/* watermark over the lower edge */
.brand { position: absolute; left: 844px; bottom: 24px; width: 232px; display: flex; flex-direction: column; align-items: center; color: #cfcfcf; opacity: .5; pointer-events: none; font-weight: 700; font-family: "DejaVu Sans", sans-serif; }
.b1 { font-size: 66px; line-height: 66px; }
.b2 { font: 700 38px/42px "Liberation Sans", sans-serif; }
```
